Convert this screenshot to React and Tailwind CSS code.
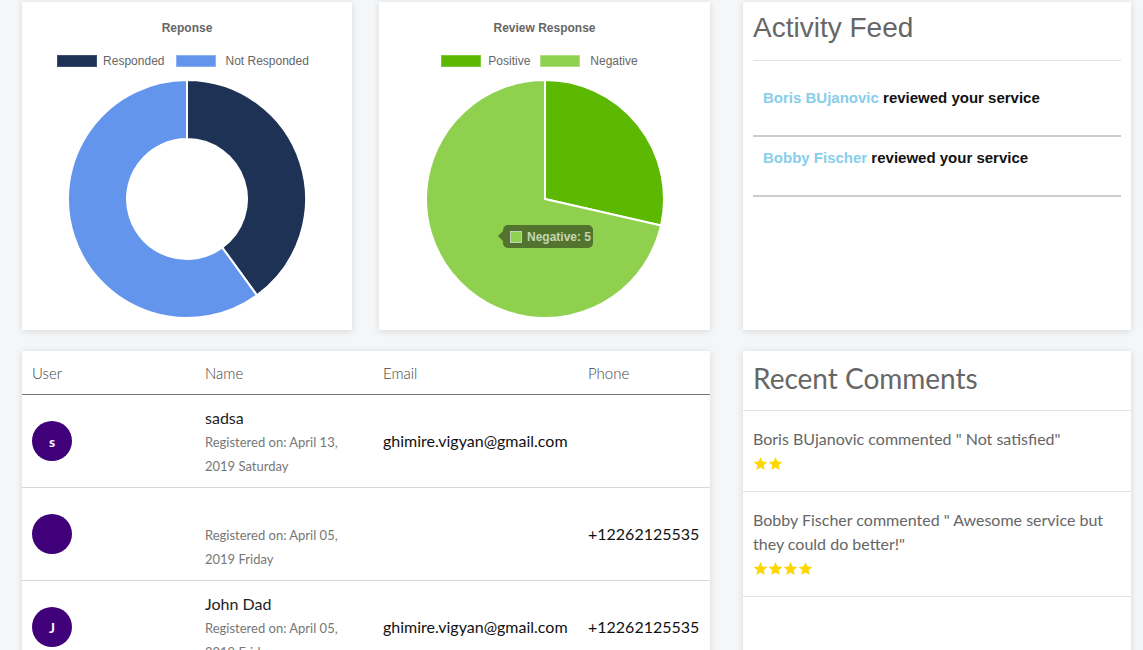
import React from "react";

const pt = (cx, cy, r, deg) => {
  const a = (deg * Math.PI) / 180;
  return [cx + r * Math.sin(a), cy - r * Math.cos(a)];
};

const slice = (cx, cy, r, a0, a1, ri = 0) => {
  const [x0, y0] = pt(cx, cy, r, a0);
  const [x1, y1] = pt(cx, cy, r, a1);
  const large = a1 - a0 > 180 ? 1 : 0;
  if (ri > 0) {
    const [ix1, iy1] = pt(cx, cy, ri, a1);
    const [ix0, iy0] = pt(cx, cy, ri, a0);
    return `M${x0},${y0} A${r},${r} 0 ${large} 1 ${x1},${y1} L${ix1},${iy1} A${ri},${ri} 0 ${large} 0 ${ix0},${iy0} Z`;
  }
  return `M${cx},${cy} L${x0},${y0} A${r},${r} 0 ${large} 1 ${x1},${y1} Z`;
};

const Star = () => (
  <svg width="15" height="15" viewBox="0 0 24 24" className="block">
    <path
      d="M12 1.5l3.1 7.2 7.8.7-5.9 5.2 1.8 7.7L12 18.3l-6.8 4 1.8-7.7L1.1 9.4l7.8-.7z"
      fill="#ffd700"
    />
  </svg>
);

const Card = ({ className = "", children }) => (
  <div className={`bg-white shadow-[0_1px_7px_rgba(0,0,0,0.13)] ${className}`}>{children}</div>
);

const users = [
  { letter: "s", name: "sadsa", reg: "Registered on: April 13, 2019 Saturday", email: "ghimire.vigyan@gmail.com", phone: "" },
  { letter: "", name: "", reg: "Registered on: April 05, 2019 Friday", email: "", phone: "+12262125535" },
  { letter: "J", name: "John Dad", reg: "Registered on: April 05, 2019 Friday", email: "ghimire.vigyan@gmail.com", phone: "+12262125535" },
];

export default function App() {
  return (
    <div className="h-[650px] w-[1143px] overflow-hidden bg-[#f5f6f8]">
      <div className="flex pl-[22px] pt-[2px] gap-[33px]">
        {/* Left column */}
        <div className="w-[688px] flex flex-col">
          <div className="flex justify-between">
            {/* Chart 1 */}
            <Card className="w-[330px] h-[328px] flex flex-col items-center pt-[19px] font-['Liberation_Sans',Arial,sans-serif]">
              <div className="text-[12px] leading-[14px] font-bold text-[#666]">Reponse</div>
              <div className="mt-[19px] flex items-center h-[14px] text-[12px] text-[#666] pr-[8px]">
                <span className="w-[40px] h-[12px] bg-[#1d3254] border border-[#3b4f6e]" />
                <span className="ml-[6px]">Responded</span>
                <span className="ml-[11px] w-[40px] h-[12px] bg-[#6495ed] border border-[#8fb3f2]" />
                <span className="ml-[10px]">Not Responded</span>
              </div>
              <svg width="242" height="242" viewBox="0 0 242 242" className="mt-[10px]">
                <path d={slice(121, 121, 119, 0, 144, 60)} fill="#1d3254" stroke="#fff" strokeWidth="2" />
                <path d={slice(121, 121, 119, 144, 360, 60)} fill="#6495ed" stroke="#fff" strokeWidth="2" />
              </svg>
            </Card>
            {/* Chart 2 */}
            <Card className="relative w-[331px] h-[328px] flex flex-col items-center pt-[19px] font-['Liberation_Sans',Arial,sans-serif]">
              <div className="text-[12px] leading-[14px] font-bold text-[#666]">Review Response</div>
              <div className="mt-[19px] flex items-center h-[14px] text-[12px] text-[#666] pr-[10px]">
                <span className="w-[40px] h-[12px] bg-[#5cb800] border border-[#7fc93a]" />
                <span className="ml-[7px]">Positive</span>
                <span className="ml-[10px] w-[40px] h-[12px] bg-[#8fd14f] border border-[#b0df82]" />
                <span className="ml-[10px]">Negative</span>
              </div>
              <svg width="242" height="242" viewBox="0 0 242 242" className="mt-[10px]">
                <path d={slice(121, 121, 119, 0, 102.86)} fill="#5cb800" stroke="#fff" strokeWidth="2" />
                <path d={slice(121, 121, 119, 102.86, 360)} fill="#8fd14f" stroke="#fff" strokeWidth="2" />
              </svg>
              <div className="absolute left-[124px] top-[223px] w-[90px] h-[23px] rounded-[5px] bg-[#52742f] flex items-center pl-[7px]">
                <span className="absolute left-[-5px] top-[6px] w-0 h-0 border-y-[5px] border-y-transparent border-r-[5px] border-r-[#52742f]" />
                <span className="w-[12px] h-[12px] bg-[#8fd14f] border border-[#c4d2b6]" />
                <span className="ml-[5px] text-[12px] font-bold text-[#c3d6af]">Negative: 5</span>
              </div>
            </Card>
          </div>

          {/* Table */}
          <Card className="mt-[21px] w-[688px] font-['Lato','Open_Sans',sans-serif]">
            <div className="grid grid-cols-[173px_178px_205px_132px] h-[44px] items-center border-b border-[#777] text-[15px] font-light text-[#444]">
              <div className="px-[10px] pt-[2px]">User</div>
              <div className="px-[10px] pt-[2px]">Name</div>
              <div className="px-[10px] pt-[2px]">Email</div>
              <div className="px-[10px] pt-[2px]">Phone</div>
            </div>
            {users.map((u, i) => (
              <div
                key={i}
                className="grid grid-cols-[173px_178px_205px_132px] h-[93px] items-center border-b border-[#d8d8d8]"
              >
                <div className="px-[10px]">
                  <div className="w-[40px] h-[40px] rounded-full bg-[#3f0079] flex items-center justify-center text-white text-[14px] font-bold">
                    {u.letter}
                  </div>
                </div>
                <div className="px-[10px] pt-[1px]">
                  <div className="h-[24px] leading-[24px] text-[16px] text-[#222]">{u.name}</div>
                  <div className="text-[13px] leading-[24px] text-[#777]">{u.reg}</div>
                </div>
                <div className="px-[10px] text-[16px] text-[#111] whitespace-nowrap">{u.email}</div>
                <div className="px-[10px] text-[16px] text-[#111]">{u.phone}</div>
              </div>
            ))}
          </Card>
        </div>

        {/* Right column */}
        <div className="w-[388px] flex flex-col">
          <Card className="h-[328px] px-[10px] pt-[10px] font-['Liberation_Sans',Arial,sans-serif]">
            <div className="text-[28px] leading-[32px] text-[#666] pb-[16px] border-b border-[#e3e3e3]">Activity Feed</div>
            <div className="px-[10px] pt-[29px] pb-[29px] border-b-2 border-[#cccccc] text-[15px] leading-[16px] font-bold text-[#111]">
              <span className="text-[#87ceeb]">Boris BUjanovic</span> reviewed your service
            </div>
            <div className="px-[10px] pt-[13px] pb-[29px] border-b-2 border-[#cccccc] text-[15px] leading-[16px] font-bold text-[#111]">
              <span className="text-[#87ceeb]">Bobby Fischer</span> reviewed your service
            </div>
          </Card>

          <Card className="mt-[21px] h-[400px] font-['Lato','Open_Sans',sans-serif]">
            <div className="px-[10px] pt-[10px] pb-[15px] text-[28px] leading-[34px] text-[#666] border-b border-[#e3e3e3]">
              Recent Comments
            </div>
            <div className="px-[10px] pt-[16px] pb-[16px] border-b border-[#e3e3e3] text-[16px] leading-[24px] text-[#666]">
              <div>Boris BUjanovic commented " Not satisfied"</div>
              <div className="h-[24px] flex items-center">
                <Star />
                <Star />
              </div>
            </div>
            <div className="px-[10px] pt-[16px] pb-[16px] border-b border-[#e3e3e3] text-[16px] leading-[24px] text-[#666]">
              <div>Bobby Fischer commented " Awesome service but they could do better!"</div>
              <div className="h-[24px] flex items-center">
                <Star />
                <Star />
                <Star />
                <Star />
              </div>
            </div>
          </Card>
        </div>
      </div>
    </div>
  );
}
